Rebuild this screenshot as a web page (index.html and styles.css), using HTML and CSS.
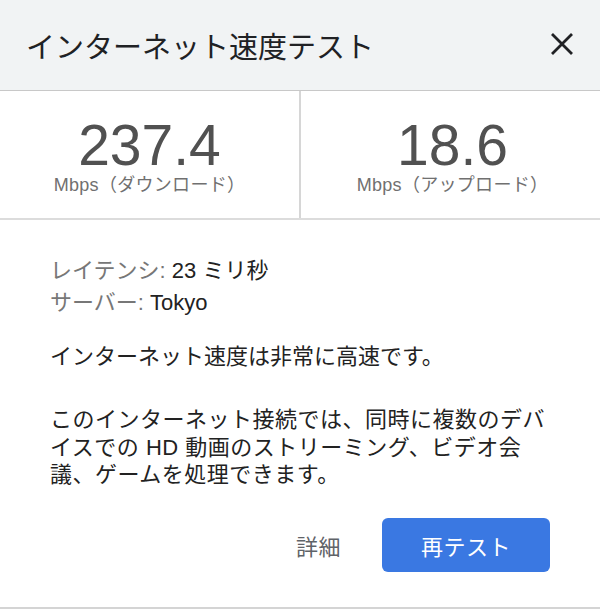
FILE: index.html
```html
<!DOCTYPE html>
<html lang="ja">
<head>
    <meta charset="UTF-8">
    <meta name="viewport" content="width=device-width, initial-scale=1.0">
    <title>インターネット速度テスト</title>
    <link rel="stylesheet" href="styles.css">
</head>
<body>

    <div class="dialog">
        <div class="header">
            <h1 class="title">インターネット速度テスト</h1>
            <button class="close" aria-label="閉じる">
                <svg width="24" height="24" viewBox="0 0 24 24">
                    <path d="M2 2 L22 22 M22 2 L2 22" stroke="#202124" stroke-width="2.8" fill="none"/>
                </svg>
            </button>
        </div>

        <div class="metrics">
            <div class="metric">
                <div class="value">237.4</div>
                <div class="unit">Mbps（ダウンロード）</div>
            </div>
            <div class="metric">
                <div class="value">18.6</div>
                <div class="unit">Mbps（アップロード）</div>
            </div>
        </div>

        <div class="content">
            <div class="info">
                <div><span class="label">レイテンシ:</span> 23 ミリ秒</div>
                <div><span class="label">サーバー:</span> Tokyo</div>
            </div>

            <p class="summary">インターネット速度は非常に高速です。</p>

            <p class="detail">このインターネット接続では、同時に複数のデバ<br>イスでの HD 動画のストリーミング、ビデオ会<br>議、ゲームを処理できます。</p>

            <div class="actions">
                <button class="link-btn">詳細</button>
                <button class="primary-btn">再テスト</button>
            </div>
        </div>
    </div>

</body>
</html>
```

FILE: styles.css
```css
body {
    font-family: "Liberation Sans", "Noto Sans CJK JP", sans-serif;
    margin: 0;
    padding: 0;
    background: #fff;
    color: #222;
}
.dialog {
    width: 600px;
    border-bottom: 2px solid #d4d4d4;
}
/* Header */
.header {
    height: 90px;
    background: #f1f3f4;
    border-bottom: 1px solid #c8c8c8;
    display: flex;
    align-items: center;
    justify-content: space-between;
    padding: 0 26px 0 26px;
}
.title {
    margin: 0;
    font-size: 29px;
    font-weight: normal;
    color: #202124;
}
.close {
    background: none;
    border: none;
    padding: 0;
    width: 24px;
    height: 24px;
    margin-top: -3px;
    cursor: pointer;
}
.close svg {
    display: block;
}
/* Speed results */
.metrics {
    display: grid;
    grid-template-columns: 301px 1fr;
    border-bottom: 2px solid #dcdcdc;
}
.metric {
    text-align: center;
    padding: 24px 0 23px;
}
.metric:first-child {
    border-right: 2px solid #d6d6d6;
}
.metric:last-child {
    padding-left: 4px;
}
.value {
    font-size: 57px;
    line-height: 60px;
    color: #515151;
}
.unit {
    font-size: 18px;
    line-height: 20px;
    letter-spacing: 0.3px;
    color: #707070;
}
/* Details */
.content {
    padding: 35px 40px 35px 50px;
    font-size: 22px;
}
.info {
    line-height: 32px;
}
.label {
    color: #777;
}
.summary {
    margin: 24px 0 0;
    line-height: 27px;
}
.detail {
    margin: 36px 0 0;
    line-height: 27.5px;
    letter-spacing: 0.5px;
}
.actions {
    display: flex;
    justify-content: flex-end;
    align-items: center;
    gap: 41px;
    margin-top: 29px;
    padding-right: 10px;
}
.link-btn, .primary-btn {
    font-family: inherit;
    font-size: 22px;
    letter-spacing: 0.5px;
    border: none;
    cursor: pointer;
}
.link-btn {
    background: none;
    color: #5f6368;
    padding: 0;
}
.primary-btn {
    background: #3a78e2;
    color: #fff;
    width: 168px;
    height: 54px;
    border-radius: 6px;
}
```
